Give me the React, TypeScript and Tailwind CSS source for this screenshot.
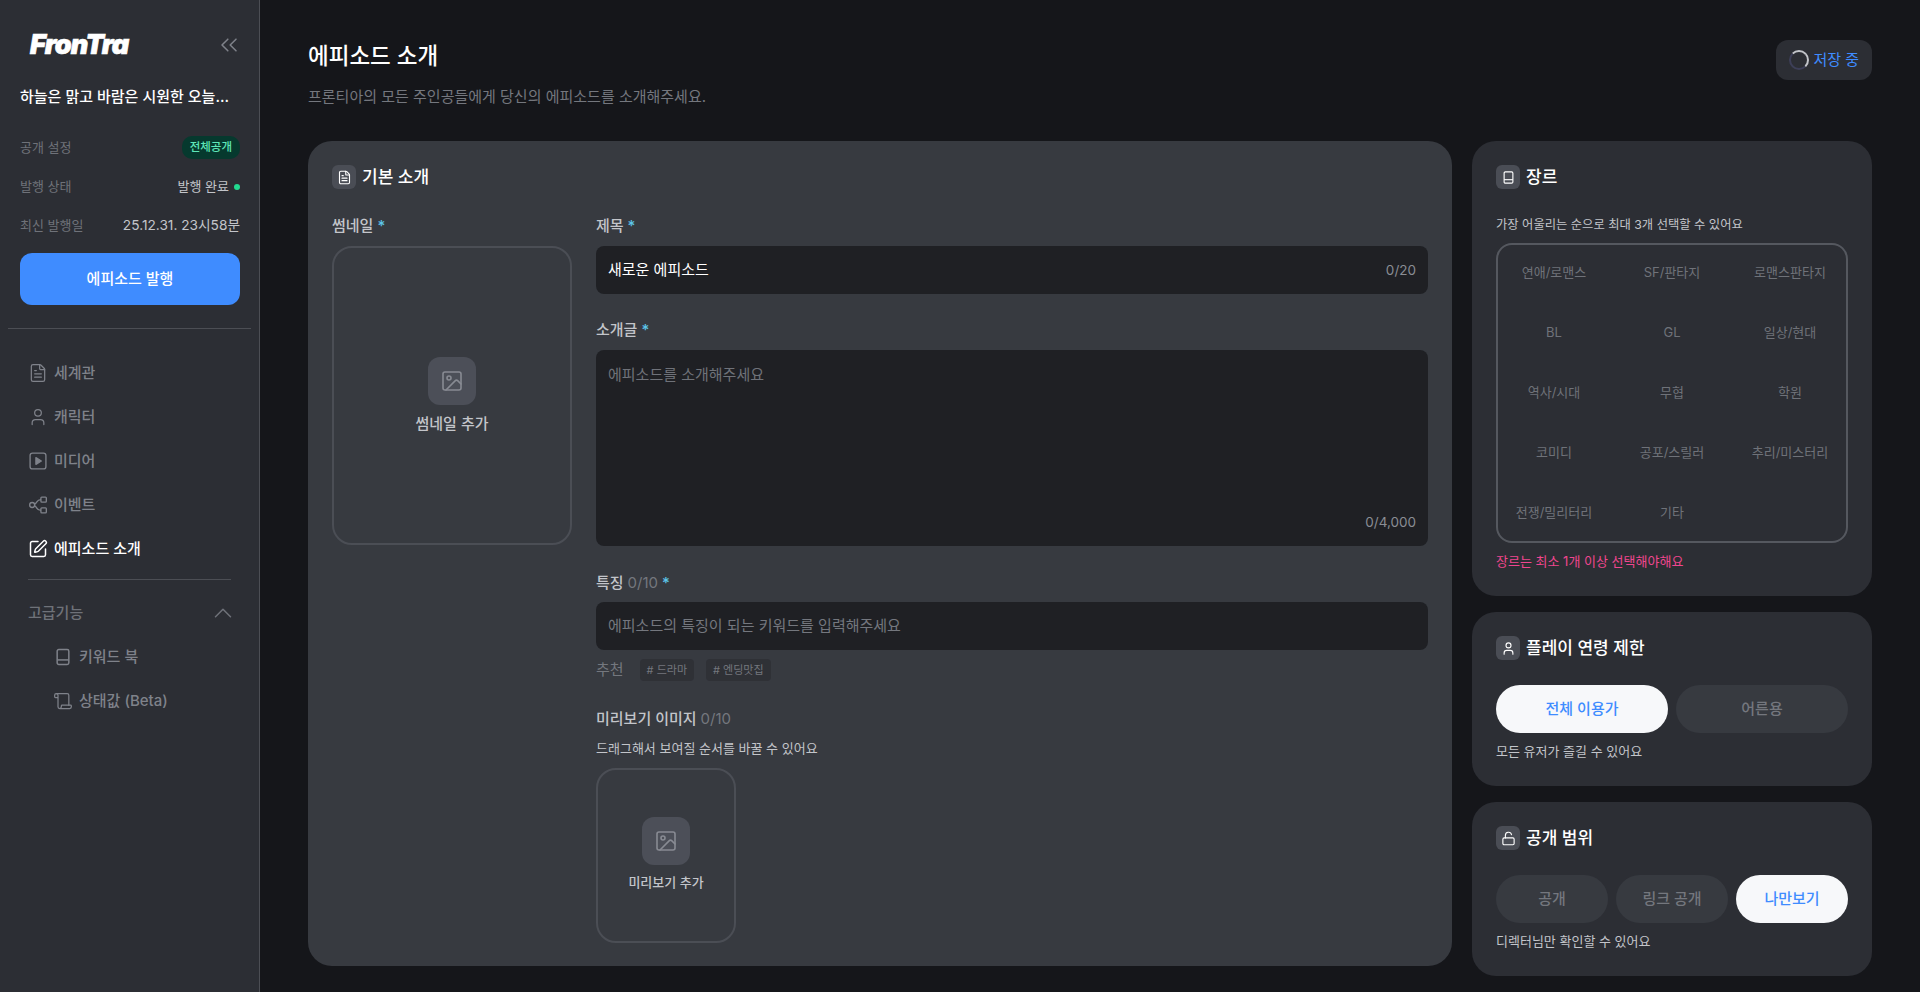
import { ChevronUp, ChevronsLeft, FileText, Image, LockOpen, Scroll, SquarePen, User } from "lucide-react";
import type { ReactNode } from "react";

const genres = [
  "연애/로맨스", "SF/판타지", "로맨스판타지",
  "BL", "GL", "일상/현대",
  "역사/시대", "무협", "학원",
  "코미디", "공포/스릴러", "추리/미스터리",
  "전쟁/밀리터리", "기타",
];

const BookIcon = ({ className }: { className: string }) => (
  <svg viewBox="0 0 24 24" fill="none" stroke="currentColor" strokeWidth="1.8" className={className}>
    <rect x="5" y="3" width="14" height="18" rx="2" />
    <path d="M5 15.500h14" />
  </svg>
);

const EventIcon = ({ className }: { className: string }) => (
  <svg viewBox="0 0 24 24" fill="none" stroke="currentColor" strokeWidth="1.6" className={className}>
    <circle cx="5" cy="12" r="3" />
    <rect x="15.500" y="2.500" width="6.500" height="6" rx="1" />
    <rect x="15.500" y="15.500" width="6.500" height="6" rx="1" />
    <path d="M8 11c3-1 2-5.500 7.500-5.500M8 13c3 1 2 5.500 7.500 5.500" />
  </svg>
);

const PlayIcon = ({ className }: { className: string }) => (
  <svg viewBox="0 0 24 24" fill="none" stroke="currentColor" strokeWidth="1.6" className={className}>
    <rect x="2.500" y="2.500" width="19" height="19" rx="3" />
    <path d="M9.500 8v8l6.500-4z" fill="currentColor" strokeLinejoin="round" />
  </svg>
);

const NavItem = ({ icon, label, active }: { icon: ReactNode; label: string; active?: boolean }) => (
  <div className={`flex h-11 items-center gap-[6px] text-[15px] font-medium ${active ? "text-white" : "text-[#7f828a]"}`}>
    {icon}
    <span>{label}</span>
  </div>
);

const Row = ({ label, children }: { label: string; children: ReactNode }) => (
  <div className="flex h-[39px] items-center justify-between text-[13px]">
    <span className="text-[#6f7279]">{label}</span>
    {children}
  </div>
);

const Required = () => <span className="ml-1 text-[#5cc4e8]">*</span>;

const CardTitle = ({ icon, title }: { icon: ReactNode; title: string }) => (
  <div className="flex items-center gap-[6px]">
    <div className="flex h-6 w-6 items-center justify-center rounded-md bg-[#4a4d55] text-white">{icon}</div>
    <h2 className="text-[17px] leading-6 font-medium text-white">{title}</h2>
  </div>
);

const AddImage = ({ label, tall }: { label: string; tall?: boolean }) => (
  <div className={`flex flex-col items-center justify-center rounded-[20px] border-2 border-[#4b4e55] ${tall ? "h-[299px] w-[240px] pt-[2px]" : "h-[175px] w-[140px]"}`}>
    <div className="flex h-12 w-12 items-center justify-center rounded-xl bg-[#4c4f58] text-[#888b93]">
      <Image size={24} strokeWidth={1.6} />
    </div>
    <span className={`mt-[8px] font-medium text-[#c3c5ca] ${tall ? "text-[15px]" : "text-[13px]"}`}>{label}</span>
  </div>
);

const Pill = ({ label, active }: { label: string; active?: boolean }) => (
  <div className={`flex h-12 flex-1 items-center justify-center rounded-full text-[15px] font-medium ${active ? "bg-[#f7f8fa] text-[#3f8cff]" : "bg-[#373a40] text-[#74777e]"}`}>
    {label}
  </div>
);

const App = () => {
  return (
    <div className="flex h-[992px] overflow-hidden bg-[#15161a] font-['Inter','Noto_Sans_CJK_KR',sans-serif]">
      <aside className="w-[260px] shrink-0 border-r border-[#4c4e54] bg-[#2c2e34]">
        <div className="flex h-[89px] items-center justify-between pl-[30px] pr-[16px]">
          <span className="text-[27px] leading-none font-black italic tracking-[-0.8px] text-white [-webkit-text-stroke:0.7px_white]">FronTra</span>
          <ChevronsLeft size={28} strokeWidth={1.3} className="text-[#7f828a]" />
        </div>
        <div className="pl-5 pr-[19px]">
          <p className="text-[15px] leading-4 font-medium whitespace-nowrap text-white">하늘은 맑고 바람은 시원한 오늘...</p>
          <div className="mt-[23px]">
            <Row label="공개 설정">
              <span className="flex h-[23px] items-center rounded-[10px] bg-[#06392e] px-2 text-[11.500px] font-medium text-[#5ee6b8]">전체공개</span>
            </Row>
            <Row label="발행 상태">
              <span className="flex items-center gap-[5px] text-[#c3c5ca]">
                발행 완료
                <span className="h-[6px] w-[6px] rounded-full bg-[#22d98f]" />
              </span>
            </Row>
            <Row label="최신 발행일">
              <span className="text-[13.700px] text-[#c3c5ca]">25.12.31. 23시58분</span>
            </Row>
          </div>
          <button className="mt-[8px] h-[52px] w-full rounded-xl bg-[#3f8cff] text-[15px] font-medium text-white">에피소드 발행</button>
        </div>
        <div className="mx-2 mt-[23px] border-t border-[#4c4e54]" />
        <nav className="mt-[22px] px-7">
          <NavItem label="세계관" icon={<FileText size={20} strokeWidth={1.5} />} />
          <NavItem label="캐릭터" icon={<User size={20} strokeWidth={1.5} />} />
          <NavItem label="미디어" icon={<PlayIcon className="h-5 w-5" />} />
          <NavItem label="이벤트" icon={<EventIcon className="h-5 w-5" />} />
          <NavItem label="에피소드 소개" active icon={<SquarePen size={20} strokeWidth={1.8} />} />
          <div className="mt-[8px] border-t border-[#4c4e54]" />
          <div className="flex h-[66px] items-center justify-between text-[15px] font-medium text-[#6f7279]">
            <span>고급기능</span>
            <ChevronUp size={30} strokeWidth={1.2} className="-mr-[7px]" />
          </div>
          <div className="-mt-[11px] pl-[25px]">
            <NavItem label="키워드 북" icon={<BookIcon className="h-5 w-5" />} />
            <NavItem label="상태값 (Beta)" icon={<Scroll size={20} strokeWidth={1.5} />} />
          </div>
        </nav>
      </aside>

      <main className="min-w-0 flex-1 px-12">
        <header className="flex h-[141px] items-start justify-between">
          <div className="pt-[41px]">
            <h1 className="text-[22.500px] leading-[30px] font-medium text-white">에피소드 소개</h1>
            <p className="mt-[15px] text-[15px] text-[#74777e]">프론티아의 모든 주인공들에게 당신의 에피소드를 소개해주세요.</p>
          </div>
          <div className="mt-10 flex h-10 items-center gap-1 rounded-xl bg-[#2c2e34] px-[13px] text-[15px] text-[#3f8cff]">
            <span className="h-5 w-5 rounded-full border-2 border-[#3d3f58] border-t-[#c3c5ca] border-r-[#c3c5ca]" />
            저장 중
          </div>
        </header>

        <div className="flex items-start gap-5">
          <section className="h-[825px] w-[1144px] shrink-0 rounded-3xl bg-[#373a40] p-6">
            <CardTitle icon={<FileText size={15} strokeWidth={1.8} />} title="기본 소개" />
            <div className="mt-6 flex gap-6">
              <div>
                <label className="block h-[33px] text-[15px] leading-[26px] font-medium text-[#c3c5ca]">썸네일<Required /></label>
                <AddImage label="썸네일 추가" tall />
              </div>
              <div className="flex-1">
                <label className="block h-[33px] text-[15px] leading-[26px] font-medium text-[#c3c5ca]">제목<Required /></label>
                <div className="flex h-12 items-center justify-between rounded-lg bg-[#1f2024] px-3">
                  <span className="text-[15px] text-white">새로운 에피소드</span>
                  <span className="text-[13.500px] text-[#8a8d94]">0/20</span>
                </div>
                <label className="mt-[21px] block h-[35px] text-[15px] leading-[30px] font-medium text-[#c3c5ca]">소개글<Required /></label>
                <div className="relative h-[196px] rounded-lg bg-[#1f2024] px-3 py-[14px] text-[15px] text-[#6f7279]">
                  에피소드를 소개해주세요
                  <span className="absolute right-3 bottom-[14px] text-[13.500px] text-[#8a8d94]">0/4,000</span>
                </div>
                <label className="mt-[24px] block h-[32px] text-[15px] leading-[26px] font-medium text-[#c3c5ca]">
                  특징 <span className="font-normal text-[#74777e]">0/10</span><Required />
                </label>
                <div className="flex h-12 items-center rounded-lg bg-[#1f2024] px-3 text-[15px] text-[#74777e]">에피소드의 특징이 되는 키워드를 입력해주세요</div>
                <div className="mt-[9px] flex items-center gap-4">
                  <span className="text-[15px] text-[#74777e]">추천</span>
                  <div className="flex gap-3">
                    <span className="flex h-[22px] items-center rounded bg-[#2f3136] px-[7px] text-[11px] text-[#74777e]"># 드라마</span>
                    <span className="flex h-[22px] items-center rounded bg-[#2f3136] px-[7px] text-[11px] text-[#74777e]"># 엔딩맛집</span>
                  </div>
                </div>
                <label className="mt-[25px] block text-[15px] leading-6 font-medium text-[#c3c5ca]">
                  미리보기 이미지 <span className="font-normal text-[#74777e]">0/10</span>
                </label>
                <p className="mt-[9px] mb-[12px] text-[13px] leading-4 text-[#c3c5ca]">드래그해서 보여질 순서를 바꿀 수 있어요</p>
                <AddImage label="미리보기 추가" />
              </div>
            </div>
          </section>

          <div className="flex w-[400px] shrink-0 flex-col gap-4">
            <section className="h-[455px] rounded-3xl bg-[#2c2e34] p-6">
              <CardTitle icon={<BookIcon className="h-[15px] w-[15px]" />} title="장르" />
              <p className="mt-[28px] text-[12.300px] leading-4 text-[#c3c5ca]">가장 어울리는 순으로 최대 3개 선택할 수 있어요</p>
              <div className="mt-[10px] grid h-[300px] grid-cols-[repeat(3,118px)] grid-rows-[repeat(5,60px)] content-center justify-center rounded-2xl border-2 border-[#55585f]">
                {genres.map((g) => (
                  <div key={g} className="flex items-center justify-center text-[13px] whitespace-nowrap text-[#6f7279]">{g}</div>
                ))}
              </div>
              <p className="mt-[10px] text-[13px] leading-4 text-[#f0468f]">장르는 최소 1개 이상 선택해야해요</p>
            </section>

            <section className="h-[174px] rounded-3xl bg-[#2c2e34] p-6">
              <CardTitle icon={<User size={15} strokeWidth={1.8} />} title="플레이 연령 제한" />
              <div className="mt-[25px] flex gap-2">
                <Pill label="전체 이용가" active />
                <Pill label="어른용" />
              </div>
              <p className="mt-[10px] text-[13px] leading-4 text-[#c3c5ca]">모든 유저가 즐길 수 있어요</p>
            </section>

            <section className="h-[174px] rounded-3xl bg-[#2c2e34] p-6">
              <CardTitle icon={<LockOpen size={15} strokeWidth={1.8} />} title="공개 범위" />
              <div className="mt-[25px] flex gap-2">
                <Pill label="공개" />
                <Pill label="링크 공개" />
                <Pill label="나만보기" active />
              </div>
              <p className="mt-[10px] text-[13px] leading-4 text-[#c3c5ca]">디렉터님만 확인할 수 있어요</p>
            </section>
          </div>
        </div>
      </main>
    </div>
  );
};

export default App;
